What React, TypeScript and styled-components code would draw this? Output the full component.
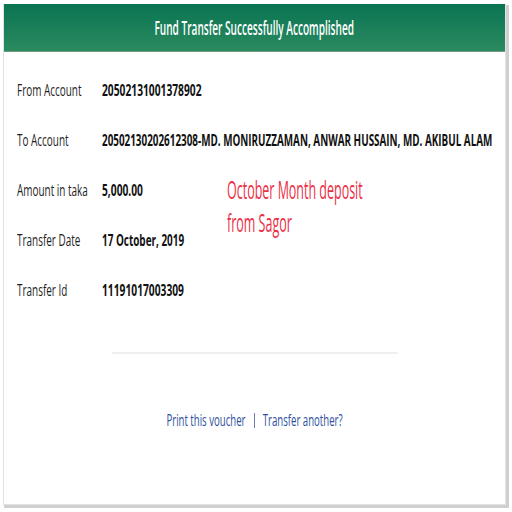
import React from "react";
import styled, { createGlobalStyle } from "styled-components";

const Global = createGlobalStyle`
  html, body { margin: 0; padding: 0; background: #ffffff; }
  body { font-family: "Open Sans", "Liberation Sans", sans-serif; }
`;

const Page = styled.div`
  width: 512px;
  height: 512px;
  padding: 4px 6px 7px 3px;
  box-sizing: border-box;
  background: #ffffff;
`;

const Card = styled.div`
  height: 100%;
  box-sizing: border-box;
  display: flex;
  flex-direction: column;
  background: #ffffff;
  border: 1px solid #e2e2e2;
  border-top: none;
  box-shadow: 2px 2px 0 1px #d0d0d0;
`;

const Header = styled.div`
  height: 48px;
  flex: none;
  display: flex;
  align-items: center;
  justify-content: center;
  background: linear-gradient(#097453, #2c8a5f);
  border-bottom: 1px solid #6f9a80;
  box-sizing: border-box;
`;

const Squeeze = styled.span<{ $sx: number; $origin?: string }>`
  display: inline-block;
  white-space: nowrap;
  line-height: 1;
  transform: scaleX(${(p) => p.$sx});
  transform-origin: ${(p) => p.$origin ?? "left"} center;
`;

const Title = styled(Squeeze)`
  color: #ffffff;
  font-size: 19px;
  font-weight: 600;
  margin-top: 2px;
`;

const Body = styled.div`
  padding: 13px 0 0 13px;
  display: flex;
  flex-direction: column;
`;

const Row = styled.div`
  position: relative;
  height: 50px;
  display: flex;
  align-items: center;
`;

const LabelCell = styled.div`
  width: 85px;
  flex: none;
`;

const Label = styled(Squeeze)`
  font-size: 17px;
  color: #1e1e1e;
`;

const Value = styled(Squeeze)`
  font-size: 16px;
  font-weight: 700;
  color: #111111;
`;

const Note = styled(Squeeze)`
  position: absolute;
  left: 210px;
  top: 8px;
  font-size: 26px;
  line-height: 33px;
  color: #ec2f48;
`;

const Divider = styled.hr`
  width: 286px;
  height: 2px;
  margin: 37px auto 0;
  border: none;
  background: #efefef;
`;

const Links = styled.div`
  margin-top: 57px;
  display: flex;
  justify-content: center;
  align-items: center;
  gap: 8px;
`;

const LinkBox = styled.div<{ $w: number }>`
  display: flex;
  justify-content: center;
  width: ${(p) => p.$w}px;
`;

const Link = styled(Squeeze)`
  font-size: 17px;
  color: #2e4f9c;
`;

const Sep = styled.span`
  width: 1px;
  height: 15px;
  background: #6d7fa6;
  margin: 2px 0 0;
`;

const rows: { label: string; value: string; sx: number }[] = [
  { label: "From Account", value: "20502131001378902", sx: 0.64 },
  {
    label: "To Account",
    value: "20502130202612308-MD. MONIRUZZAMAN, ANWAR HUSSAIN, MD. AKIBUL ALAM",
    sx: 0.617,
  },
  { label: "Amount in taka", value: "5,000.00", sx: 0.64 },
  { label: "Transfer Date", value: "17 October, 2019", sx: 0.62 },
  { label: "Transfer Id", value: "11191017003309", sx: 0.64 },
];

export default function App() {
  return (
    <>
      <Global />
      <Page>
        <Card>
          <Header>
            <Title $sx={0.53} $origin="center">
              Fund Transfer Successfully Accomplished
            </Title>
          </Header>
          <Body>
            {rows.map((r, i) => (
              <Row key={r.label}>
                <LabelCell>
                  <Label $sx={0.585}>{r.label}</Label>
                </LabelCell>
                <Value $sx={r.sx}>{r.value}</Value>
                {i === 2 && (
                  <Note $sx={0.48}>
                    October Month deposit
                    <br />
                    from Sagor
                  </Note>
                )}
              </Row>
            ))}
          </Body>
          <Divider />
          <Links>
            <LinkBox $w={80}>
              <Link $sx={0.565} $origin="center">Print this voucher</Link>
            </LinkBox>
            <Sep />
            <LinkBox $w={80}>
              <Link $sx={0.565} $origin="center">Transfer another?</Link>
            </LinkBox>
          </Links>
        </Card>
      </Page>
    </>
  );
}
